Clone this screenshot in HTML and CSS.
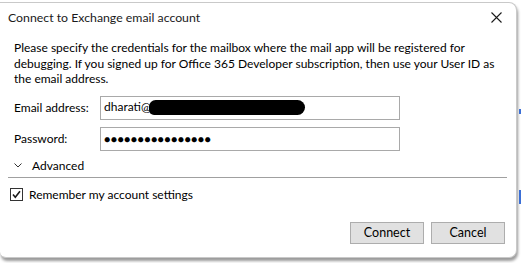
FILE: index.html
```html
<!DOCTYPE html>
<html lang="en">
<head>
    <meta charset="UTF-8">
    <meta name="viewport" content="width=device-width, initial-scale=1.0">
    <title>Connect to Exchange email account</title>
    <link rel="stylesheet" href="styles.css">
</head>
<body>
    <div class="dialog">
        <div class="titlebar">
            <span class="title">Connect to Exchange email account</span>
            <span class="close-btn">
                <svg width="11" height="11" viewBox="0 0 11 11"><path d="M0.5 0.5 L10.5 10.5 M10.5 0.5 L0.5 10.5" stroke="#1a1a1a" stroke-width="1.1" fill="none"/></svg>
            </span>
        </div>

        <div class="content">
            <p class="intro">Please specify the credentials for the mailbox where the mail app will be registered for debugging. If you signed up for Office 365 Developer subscription, then use your User ID as the email address.</p>

            <div class="form-grid">
                <label class="field-label">Email address:</label>
                <div class="text-box">dharati@<span class="redacted"></span></div>
                <label class="field-label">Password:</label>
                <div class="text-box password">&#9679;&#9679;&#9679;&#9679;&#9679;&#9679;&#9679;&#9679;&#9679;&#9679;&#9679;&#9679;&#9679;&#9679;&#9679;&#9679;</div>
            </div>

            <div class="advanced">
                <svg width="8" height="5" viewBox="0 0 8 5"><path d="M0.5 0.5 L4 4 L7.5 0.5" stroke="#333" stroke-width="1" fill="none"/></svg>
                <span>Advanced</span>
            </div>
        </div>

        <div class="separator"></div>

        <div class="remember">
            <span class="check-box">
                <svg width="11" height="11" viewBox="0 0 11 11"><path d="M2 5.5 L4.3 8.2 L9 2.2" stroke="#1a1a1a" stroke-width="1.6" fill="none"/></svg>
            </span>
            <span>Remember my account settings</span>
        </div>

        <div class="button-row">
            <button>Connect</button>
            <button>Cancel</button>
        </div>
    </div>
    <div class="edge-marks">
        <span class="mark mark-top"></span>
        <span class="mark mark-bottom"></span>
    </div>
</body>
</html>
```

FILE: styles.css
```css
* {
    box-sizing: border-box;
    font-family: 'Lato', 'Noto Sans', sans-serif;
}

body {
    margin: 0;
    width: 521px;
    height: 263px;
    overflow: hidden;
    background-color: #ffffff;
    display: flex;
    align-items: flex-start;
    color: #000;
}

.dialog {
    width: 517px;
    height: 256px;
    margin-top: 2px;
    background-color: #ffffff;
    border: 1px solid #c9c9c9;
    border-left: none;
    border-radius: 0 8px 8px 6px;
    box-shadow: 1px 3px 3px rgba(0, 0, 0, 0.4);
    font-size: 12px;
    flex-shrink: 0;
}

.titlebar {
    height: 28px;
    display: flex;
    align-items: center;
    justify-content: space-between;
    padding: 0 14px 0 8px;
}

.title {
    font-size: 12.3px;
    color: #1a1a1a;
}

.close-btn {
    display: flex;
    align-items: center;
    margin-top: 1px;
}

.content {
    padding: 0 14px;
}

.intro {
    margin: 9px 0 0 0;
    line-height: 15.5px;
    width: 492px;
}

.form-grid {
    display: grid;
    grid-template-columns: 86px 300px;
    row-gap: 7px;
    margin-top: 9px;
    align-items: center;
}

.field-label {
    line-height: 24px;
}

.text-box {
    height: 24px;
    border: 1px solid #a9a9a9;
    padding: 2px 0 0 3px;
    display: flex;
    align-items: flex-start;
    line-height: 16px;
}

.redacted {
    display: inline-block;
    width: 156px;
    height: 15px;
    background-color: #000;
    border-radius: 8px 9px 9px 6px;
    margin-left: -2px;
    margin-top: 1px;
}

.password {
    font-size: 10.5px;
    letter-spacing: 0.4px;
    padding-top: 3px;
}

.advanced {
    display: flex;
    align-items: center;
    gap: 10px;
    margin-top: 7px;
    height: 16px;
}

.separator {
    height: 1px;
    background-color: #a0a0a0;
    margin: 3px 9px 0 8px;
}

.remember {
    display: flex;
    align-items: center;
    gap: 6px;
    margin-top: 10px;
    padding-left: 10px;
    height: 14px;
}

.check-box {
    width: 13px;
    height: 13px;
    border: 1px solid #333;
    display: flex;
    align-items: center;
    justify-content: center;
}

.button-row {
    display: flex;
    justify-content: flex-end;
    gap: 7px;
    margin-top: 20px;
    padding-right: 11px;
}

button {
    width: 74px;
    height: 22px;
    background-color: #e1e1e1;
    border: 1px solid #adadad;
    font-size: 12.5px;
    color: #000;
    padding: 0;
}

.edge-marks {
    flex: 1;
    height: 263px;
    display: flex;
    flex-direction: column;
    align-items: flex-end;
}

.mark {
    width: 2px;
    background-color: #3b6fd6;
}

.mark-top {
    height: 5px;
    margin-top: 109px;
}

.mark-bottom {
    height: 14px;
    margin-top: 76px;
}
```
